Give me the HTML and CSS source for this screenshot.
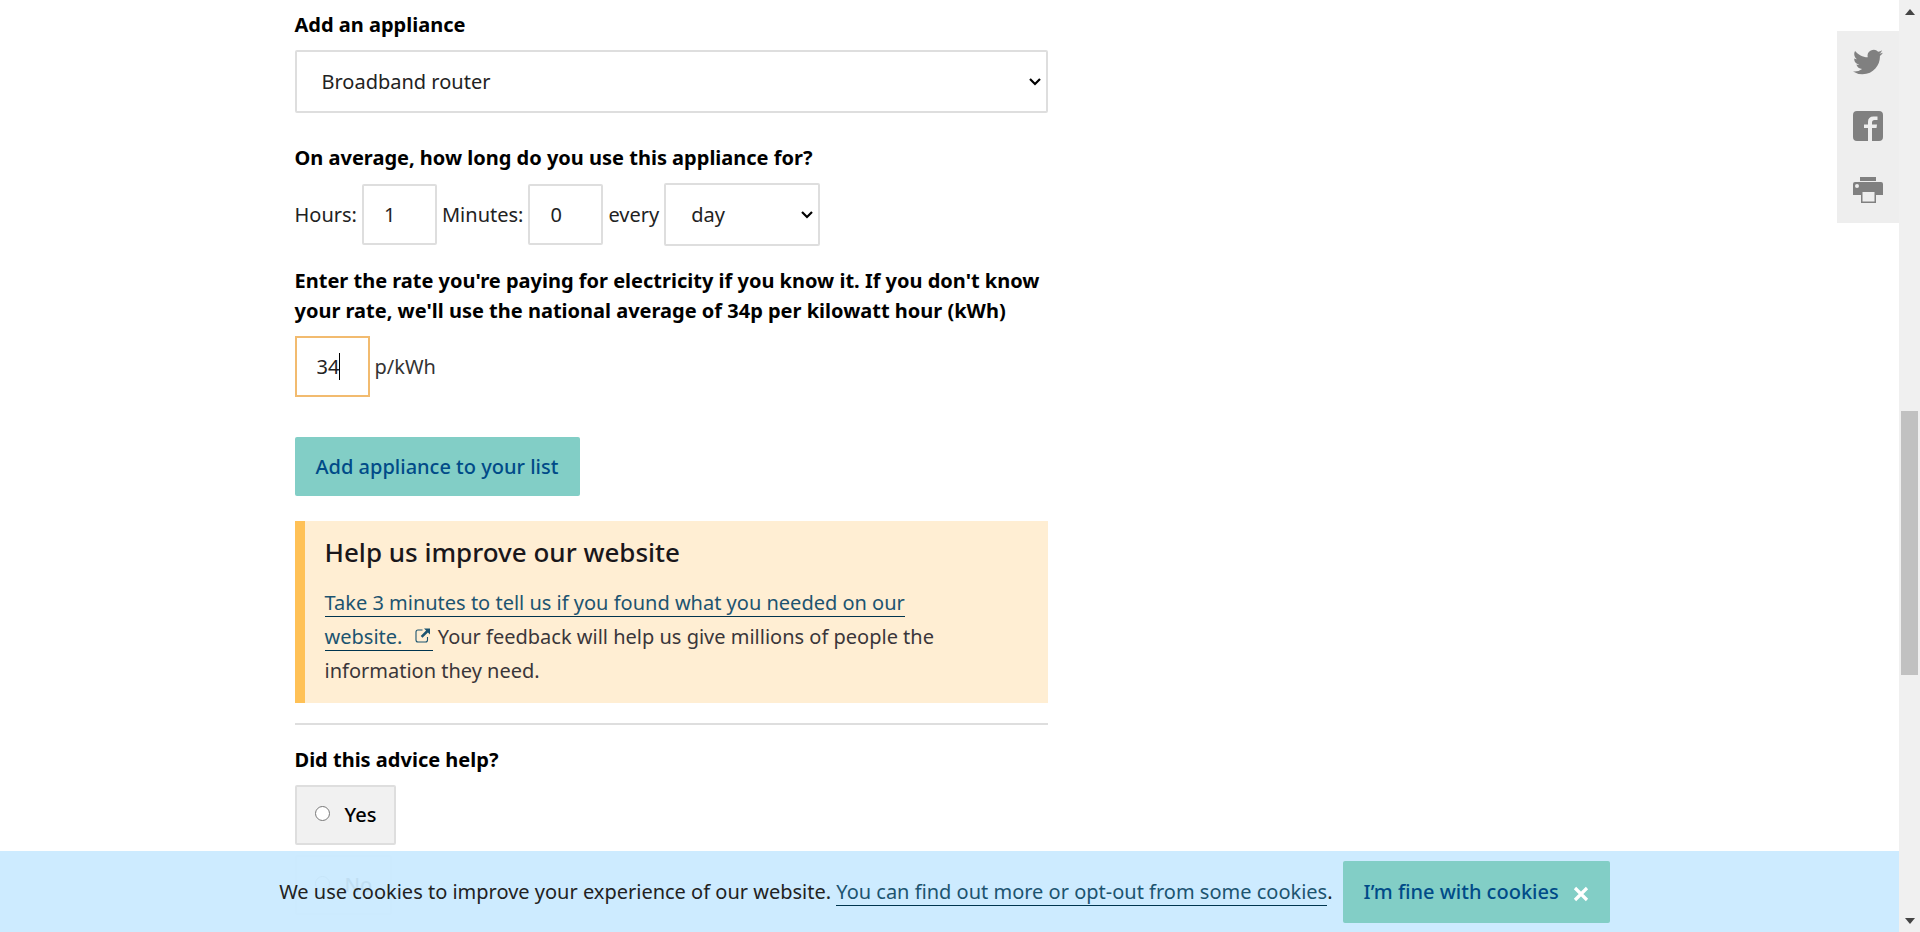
FILE: index.html
```html
<!DOCTYPE html>
<html lang="en">
<head>
<meta charset="utf-8">
<title>Electricity cost calculator</title>
<link rel="stylesheet" href="styles.css">
</head>
<body>
<div class="page">
  <main class="container">
    <div class="content">
      <form class="calculator">
        <label class="heading" for="appliance">Add an appliance</label>
        <select class="field appliance" id="appliance"><option>Broadband router</option></select>

        <fieldset class="usage">
          <legend class="heading">On average, how long do you use this appliance for?</legend>
          <div class="row">
            <label for="hours">Hours:</label>
            <input class="field number" id="hours" type="text" value="1">
            <label for="minutes">Minutes:</label>
            <input class="field number" id="minutes" type="text" value="0">
            <label for="period">every</label>
            <select class="field period" id="period"><option>day</option></select>
          </div>
        </fieldset>

        <label class="heading" for="rate">Enter the rate you're paying for electricity if you know it. If you don't know your rate, we'll use the national average of 34p per kilowatt hour (kWh)</label>
        <div class="row rate">
          <span class="focused">
            <input class="field number active" id="rate" type="text" value="34">
            <span class="caret"></span>
          </span>
          <span>p/kWh</span>
        </div>

        <button class="button" type="button">Add appliance to your list</button>
      </form>

      <aside class="callout">
        <h2 class="callout-title">Help us improve our website</h2>
        <p class="callout-text"><a class="link" href="#survey">Take 3 minutes to tell us if you found what you needed on our website. <svg class="external" viewBox="0 0 16 16" aria-hidden="true"><path d="M8 2H3.500Q1.500 2 1.500 4V12Q1.500 14 3.500 14H11Q13 14 13 12V9" fill="none" stroke="currentColor" stroke-width="1.100"/><path d="M9.500 0.500H15.500V6.500L13.400 4.400L8 9.800L6.200 8L11.600 2.600Z" fill="currentColor"/></svg></a> Your feedback will help us give millions of people the information they need.</p>
      </aside>

      <form class="feedback">
        <fieldset>
          <legend class="heading">Did this advice help?</legend>
          <div class="choices">
            <label class="choice"><input class="radio" type="radio" name="helpful">Yes</label>
            <label class="choice"><input class="radio" type="radio" name="helpful">No</label>
          </div>
        </fieldset>
      </form>
    </div>
  </main>

  <nav class="share">
    <a class="share-link" href="#twitter" aria-label="Share on Twitter"><svg class="share-icon" viewBox="0 0 24 24"><path d="M23.950 4.570a10 10 0 0 1-2.820.770 4.960 4.960 0 0 0 2.160-2.720c-.950.550-2 .950-3.130 1.180a4.920 4.920 0 0 0-8.380 4.480C7.690 8.100 4.070 6.130 1.640 3.160a4.820 4.820 0 0 0-.670 2.480c0 1.710.870 3.210 2.190 4.100a4.900 4.900 0 0 1-2.230-.620v.060a4.920 4.920 0 0 0 3.950 4.830 5 5 0 0 1-2.210.080 4.940 4.940 0 0 0 4.600 3.420A9.870 9.870 0 0 1 0 19.540a13.990 13.990 0 0 0 7.550 2.210c9.050 0 14-7.500 14-13.980 0-.210 0-.420-.020-.630a9.940 9.940 0 0 0 2.420-2.570z"/></svg></a>
    <a class="share-link" href="#facebook" aria-label="Share on Facebook"><svg class="share-icon" viewBox="0 0 30 30"><path d="M4 0H26Q30 0 30 4V26Q30 30 26 30H19V17H23.500L24 13.500H19V11.500Q19 9 21.500 9H24.500V5.500H20.500Q15 5.500 15 11V13.500H11V17H15V30H4Q0 30 0 26V4Q0 0 4 0Z"/></svg></a>
    <a class="share-link" href="#print" aria-label="Print this page"><svg class="share-icon" viewBox="0 0 30 30"><path d="M7 2H23V6H7Z"/><path fill-rule="evenodd" d="M2 7H28Q30 7 30 9V20H23V28H8V20H0V9Q0 7 2 7ZM9.500 17V26.500H21.500V17ZM4 9a2 2 0 1 0 0 4a2 2 0 1 0 0-4Z"/></svg></a>
  </nav>

  <div class="cookies">
    <p class="cookies-text">We use cookies to improve your experience of our website. <a class="link" href="#cookies">You can find out more or opt-out from some cookies</a>.</p>
    <button class="button cookies-button" type="button">I’m fine with cookies <svg class="close" viewBox="0 0 16 16" aria-hidden="true"><path d="M2 2L14 14M14 2L2 14" fill="none" stroke="currentColor" stroke-width="3.200"/></svg></button>
  </div>
</div>
<div class="scrollbar" aria-hidden="true">
  <svg class="arrow" viewBox="0 0 10 6"><path d="M5 0L10 6H0Z"/></svg>
  <div class="track-above"></div>
  <div class="thumb"></div>
  <div class="track-below"></div>
  <svg class="arrow" viewBox="0 0 10 6"><path d="M0 0H10L5 6Z"/></svg>
</div>
</body>
</html>
```
FILE: styles.css
```css
* {
  box-sizing: border-box;
}

body {
  margin: 0;
  height: 100vh;
  display: grid;
  grid-template-columns: 1fr 21px;
  overflow: hidden;
  background: #fff;
  color: #000;
  font: 400 20px/30px "Noto Sans", "Open Sans", sans-serif;
}

.page {
  position: relative;
  overflow: hidden;
}

.container {
  max-width: 1310px;
  margin: 0 auto;
  padding-top: 10px;
}

.content {
  max-width: 753px;
}

fieldset {
  margin: 0;
  padding: 0;
  border: 0;
  min-width: 0;
}

.heading {
  display: block;
  margin: 0 0 10px;
  padding: 0;
  font-weight: 700;
}

.field {
  height: 61px;
  padding: 0 20px;
  border: 2px solid #dedede;
  border-radius: 2px;
  background: #fff;
  color: #222;
  font: inherit;
}

select.field {
  height: 63px;
  padding: 0 25px;
  appearance: none;
  background: #fff url("data:image/svg+xml,%3Csvg xmlns='http://www.w3.org/2000/svg' width='12' height='8' viewBox='0 0 12 8'%3E%3Cpath d='M1 1L6 6L11 1' fill='none' stroke='%23000' stroke-width='2.200'/%3E%3C/svg%3E") no-repeat right 5px center;
}

.appliance {
  display: block;
  width: 100%;
}

.usage {
  margin: 30px 0 20px;
}

.number {
  width: 75px;
}

.period {
  width: 156px;
}

.row {
  display: flex;
  align-items: center;
  gap: 5px;
  color: #222;
}

.rate {
  margin-bottom: 40px;
  color: #333;
}

.focused {
  position: relative;
  display: flex;
}

.active {
  border-color: #f2bb6f;
  border-radius: 0;
}

.caret {
  position: absolute;
  left: 44px;
  top: 17px;
  width: 1px;
  height: 27px;
  background: #000;
}

.button {
  padding: 15px 22px 14px 21px;
  border: 0;
  border-radius: 2px;
  background: #82cec6;
  color: #004b88;
  font: inherit;
  font-weight: 500;
}

.callout {
  margin-top: 25px;
  padding: 13px 40px 15px 20px;
  border-left: 10px solid #ffc156;
  background: #ffeed3;
}

.callout-title {
  margin: 0 0 16px;
  font-size: 26px;
  line-height: 36px;
  font-weight: 500;
  color: #1a171b;
}

.callout-text {
  max-width: 620px;
  margin: 0;
  line-height: 34px;
  color: #3a363a;
}

.link {
  color: #1c5470;
  text-decoration: none;
  border-bottom: 1px solid #00354f;
}

.external {
  width: 17px;
  height: 16px;
  margin: 0 2px 0 6px;
}

.feedback {
  margin-top: 20px;
  padding-top: 20px;
  border-top: 2px solid #dedede;
}

.choices {
  display: flex;
  flex-direction: column;
  align-items: flex-start;
  gap: 10px;
}

.choice {
  display: flex;
  align-items: center;
  padding: 13px 18px;
  border: 2px solid #dedede;
  border-radius: 2px;
  background: #f1f1f1;
  font-weight: 500;
}

.radio {
  width: 15px;
  height: 15px;
  margin: 0 15px 3px 0;
}

.share {
  position: absolute;
  top: 31px;
  right: 0;
  width: 62px;
  background: #eee;
}

.share-link {
  display: flex;
  align-items: center;
  justify-content: center;
  height: 64px;
  padding-bottom: 2px;
}

.share-icon {
  width: 30px;
  height: 30px;
  fill: #808080;
}

.cookies {
  position: absolute;
  left: 0;
  right: 0;
  bottom: 0;
  display: flex;
  align-items: center;
  justify-content: center;
  gap: 10px;
  padding: 10px 10px 9px 0;
  background: rgba(202, 234, 255, .95);
}

.cookies-text {
  margin: 0;
  color: #222;
}

.cookies-button {
  padding: 16px 21px;
}

.close {
  width: 16px;
  height: 16px;
  margin-left: 9px;
  vertical-align: -3px;
  color: #fff;
}

.scrollbar {
  display: flex;
  flex-direction: column;
  align-items: center;
  padding: 9px 2px 8px;
  background: #f0f0f0;
}

.arrow {
  width: 10px;
  height: 6px;
  fill: #444;
}

.track-above {
  flex: 396;
}

.thumb {
  flex: 264;
  width: 17px;
  background: #c1c1c1;
}

.track-below {
  flex: 243;
}
```
